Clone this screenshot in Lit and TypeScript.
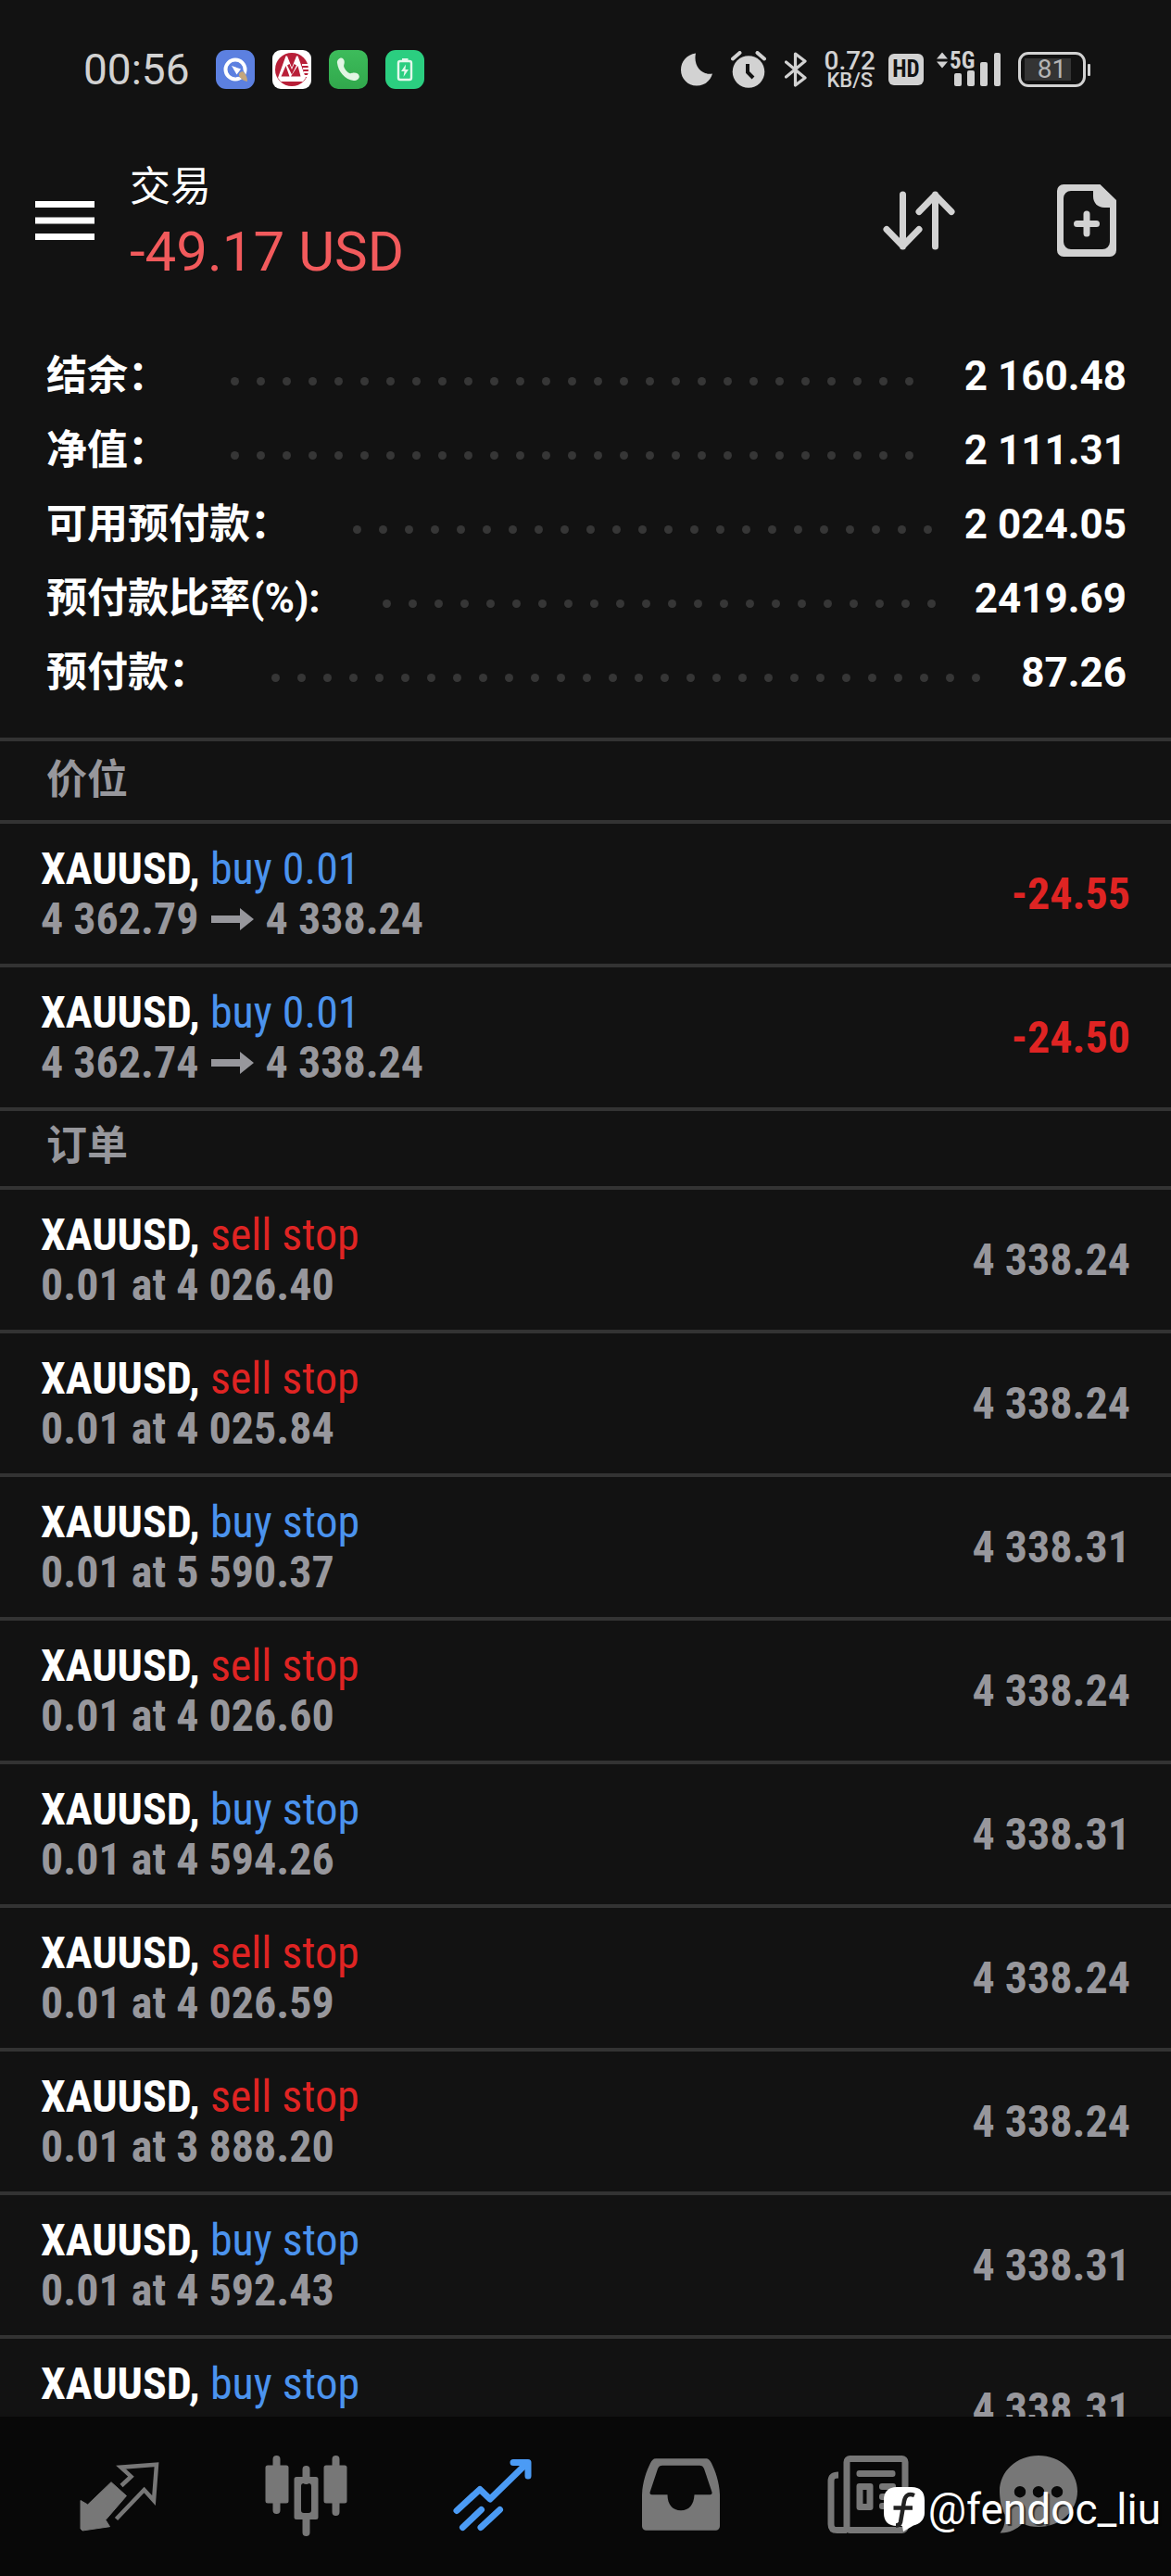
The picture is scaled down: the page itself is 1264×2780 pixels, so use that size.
import { LitElement, html, css, svg, nothing } from "lit";
import { customElement, property } from "lit/decorators.js";

type Side = "buy" | "sell";

interface Balance {
  label: string;
  value: string;
}

interface Position {
  symbol: string;
  side: Side;
  volume: string;
  open: string;
  current: string;
  profit: string;
}

interface Order {
  symbol: string;
  side: Side;
  volume: string;
  price: string;
  current: string;
}

const balances: Balance[] = [
  { label: "结余：", value: "2 160.48" },
  { label: "净值：", value: "2 111.31" },
  { label: "可用预付款：", value: "2 024.05" },
  { label: "预付款比率(%):", value: "2419.69" },
  { label: "预付款：", value: "87.26" },
];

const positions: Position[] = [
  { symbol: "XAUUSD", side: "buy", volume: "0.01", open: "4 362.79", current: "4 338.24", profit: "-24.55" },
  { symbol: "XAUUSD", side: "buy", volume: "0.01", open: "4 362.74", current: "4 338.24", profit: "-24.50" },
];

const order = (side: Side, price: string): Order => ({
  symbol: "XAUUSD",
  side,
  volume: "0.01",
  price,
  current: side === "buy" ? "4 338.31" : "4 338.24",
});

const orders: Order[] = [
  order("sell", "4 026.40"),
  order("sell", "4 025.84"),
  order("buy", "5 590.37"),
  order("sell", "4 026.60"),
  order("buy", "4 594.26"),
  order("sell", "4 026.59"),
  order("sell", "3 888.20"),
  order("buy", "4 592.43"),
  order("buy", "4 591.80"),
];

@customElement("status-bar")
export class StatusBar extends LitElement {
  static styles = css`
    :host {
      display: flex;
      justify-content: space-between;
      align-items: center;
      padding: 54px 87px 24px 90px;
      font-family: Roboto, "Noto Sans CJK SC", sans-serif;
      color: #d2d2d2;
    }
    .apps,
    .state,
    .modes {
      display: flex;
      align-items: center;
    }
    .apps {
      gap: 19px;
    }
    .state {
      gap: 14px;
    }
    .modes {
      gap: 20px;
      margin-right: 4px;
    }
    .time {
      font-size: 46px;
      line-height: 42px;
      margin-right: 9px;
    }
    svg {
      display: block;
      flex: none;
    }
    .speed {
      display: flex;
      flex-direction: column;
      align-items: center;
      font-weight: 500;
    }
    .rate {
      font-size: 28px;
      line-height: 24px;
    }
    .unit {
      font-size: 22px;
      line-height: 18px;
    }
    .hd {
      width: 38px;
      border-radius: 6px;
      background: #d2d2d2;
      color: #121212;
      font: 700 25px/34px "Roboto Condensed", "Liberation Sans Narrow", sans-serif;
      text-align: center;
    }
    .signal {
      position: relative;
    }
    .network {
      position: absolute;
      left: 14px;
      top: -3px;
      font: 700 25px/25px "Roboto Condensed", "Liberation Sans Narrow", sans-serif;
    }
    .battery {
      display: flex;
      align-items: center;
      gap: 2px;
      margin-left: 4px;
    }
    .cell {
      width: 67px;
      padding: 4px 0;
      border: 3px solid #d2d2d2;
      border-radius: 11px;
      background: linear-gradient(#343434, #343434) 4px 4px / 50px 24px no-repeat;
      color: #b5b5b5;
      font-size: 28px;
      line-height: 24px;
      text-align: center;
    }
    .tip {
      width: 3px;
      height: 13px;
      border-radius: 1px;
      background: #d2d2d2;
    }
  `;

  render() {
    return html`
      <div class="apps">
        <span class="time">00:56</span>
        <svg width="42" height="42" viewBox="0 0 42 42" aria-hidden="true">
          <rect width="42" height="42" rx="11" fill="#5c80e0" />
          <circle cx="21" cy="21" r="10.5" fill="none" stroke="#fff" stroke-width="4" />
          <path d="M24 22l5-1 8 14-14-7z" fill="#5c80e0" />
          <path d="M17 17l10 3.500-4.500 6z" fill="#fff" />
          <path d="M25 28q-1-4 4-5 5 4 5 11-6-1-9-6z" fill="#c4a67c" />
        </svg>
        <svg width="42" height="42" viewBox="0 0 42 42" aria-hidden="true">
          <rect width="42" height="42" rx="9" fill="#fff" />
          <circle cx="21" cy="21" r="18" fill="#b81f38" />
          <path d="M6 30L14.500 6.500h1.500L21 19l5-12.500h1.500L36 30l-3 4H9z" fill="#fff" />
          <path d="M9.500 28.500L14.500 17l4 11.500zM20 28.500L27.500 17l3 11.500zM16 16.500l2.500-1.500 2.500 6 2.500-6 2.500 1.500-5 10z" fill="#b81f38" />
          <path d="M32 16h7M33 20h6.500M34 24h5.500M35 28h4" stroke="#fff" stroke-width="1.800" />
        </svg>
        <svg width="42" height="42" viewBox="0 0 42 42" aria-hidden="true">
          <defs>
            <linearGradient id="call" x1="0" y1="0" x2="0" y2="1">
              <stop offset="0" stop-color="#3dbc5b" />
              <stop offset="1" stop-color="#31a84c" />
            </linearGradient>
          </defs>
          <rect width="42" height="42" rx="10" fill="url(#call)" />
          <path
            d="M9 14c-.5-3 2-5.500 4.500-5.500 2.500.5 4 3.500 3 6.500-.6 1.800-.6 3 .6 4.900 1.500 2.500 3 4.100 5.200 5.100 1.600.6 2.400-.3 4-.5 3.500-.3 6.300 1 6.500 4 0 2.500-2.600 4.600-6 4.500C17.500 32 10 23 9 14z"
            fill="#e2f5e4"
          />
        </svg>
        <svg width="42" height="42" viewBox="0 0 42 42" aria-hidden="true">
          <rect width="42" height="42" rx="11" fill="#2bce80" />
          <rect x="14" y="12" width="14" height="20" rx="2" fill="none" stroke="#e3f8ec" stroke-width="2.400" />
          <path d="M18 9h6.500v3H18z" fill="#e3f8ec" />
          <path d="M22 15.500l-5 7.500h3.500l-1 6 5.500-8h-3.500z" fill="#e3f8ec" />
        </svg>
      </div>
      <div class="state">
        <div class="modes">
          <svg width="34" height="36" viewBox="0 0 34 36" aria-label="勿扰">
            <path d="M16 0.500C6 2 0 9.500 0 18.500 0 28 7.500 35.500 17 35.500c8.500 0 15-5.500 17-13-11 2-21-8-18-22z" fill="#d2d2d2" />
          </svg>
          <svg width="38" height="40" viewBox="0 0 38 40" aria-label="闹钟">
            <circle cx="19" cy="22.500" r="17.300" fill="#d2d2d2" />
            <path d="M2 8.500L9.500 2M28.500 2L36 8.500" stroke="#d2d2d2" stroke-width="4" stroke-linecap="round" />
            <path d="M18 14v9l6 6" fill="none" stroke="#121212" stroke-width="4" />
          </svg>
          <svg width="24" height="38" viewBox="0 0 24 38" aria-label="蓝牙">
            <path d="M1.500 11L22 28 11.500 36V2L22 10 1.500 27" fill="none" stroke="#d2d2d2" stroke-width="3.200" stroke-linejoin="round" stroke-linecap="round" />
          </svg>
        </div>
        <div class="speed"><span class="rate">0.72</span><span class="unit">KB/S</span></div>
        <span class="hd">HD</span>
        <div class="signal">
          <span class="network">5G</span>
          <svg width="70" height="38" viewBox="0 0 70 38" aria-hidden="true">
            <path d="M0 7.500L6 .5l6 7zM0 10.500h12l-6 7z" fill="#d2d2d2" />
            <g fill="#d2d2d2">
              <rect x="19" y="23" width="8" height="14" rx="2" />
              <rect x="33" y="20" width="8" height="17" rx="2" />
              <rect x="47" y="11" width="8" height="26" rx="2" />
              <rect x="62" y="1" width="7" height="36" rx="2" />
            </g>
          </svg>
        </div>
        <div class="battery"><span class="cell">81</span><span class="tip"></span></div>
      </div>
    `;
  }
}

@customElement("account-summary")
export class AccountSummary extends LitElement {
  static styles = css`
    :host {
      display: block;
      padding: 58px 48px 30px 50px;
      font: 700 44px/80px Roboto, "Noto Sans CJK SC", sans-serif;
      color: #fff;
    }
    .list {
      margin: 0;
    }
    .line {
      display: flex;
      align-items: center;
    }
    .label,
    .value {
      margin: 0;
      white-space: nowrap;
    }
    .leader {
      flex: 1;
      display: flex;
      flex-wrap: wrap;
      gap: 19px;
      height: 9px;
      margin: 11px 28px 0 67px;
      overflow: hidden;
    }
    .dot {
      width: 9px;
      height: 9px;
      border-radius: 50%;
      background: #363636;
    }
  `;

  render() {
    return html`
      <dl class="list">
        ${balances.map(
          (b) => html`
            <div class="line">
              <dt class="label">${b.label}</dt>
              <span class="leader" aria-hidden="true">${Array.from({ length: 40 }, () => html`<i class="dot"></i>`)}</span>
              <dd class="value">${b.value}</dd>
            </div>
          `,
        )}
      </dl>
    `;
  }
}

@customElement("trade-row")
export class TradeRow extends LitElement {
  @property() symbol = "";
  @property() side: Side = "buy";
  @property() action = "";
  @property() from = "";
  @property() to = "";
  @property() amount = "";
  @property({ type: Boolean }) loss = false;

  static styles = css`
    :host {
      display: flex;
      align-items: center;
      justify-content: space-between;
      padding: 22px 44px 21px;
      border-bottom: 4px solid #333;
      font: 700 48px/54px "Roboto Condensed", "Liberation Sans Narrow", sans-serif;
      color: #97979c;
    }
    .symbol {
      color: #fff;
    }
    .action {
      font-weight: 400;
    }
    .buy {
      color: #4b93ee;
    }
    .sell {
      color: #df2423;
    }
    .prices {
      display: flex;
      align-items: center;
      gap: 13px;
    }
    .loss {
      color: #df2423;
    }
  `;

  render() {
    return html`
      <div>
        <div><span class="symbol">${this.symbol},</span> <span class="action ${this.side}">${this.action}</span></div>
        <div class="prices">
          <span>${this.from}</span>
          ${this.to
            ? html`<svg width="46" height="24" viewBox="0 0 46 24" aria-label="至">
                  <path d="M0 8h31V0l15 12-15 12v-8H0z" fill="#97979c" />
                </svg>
                <span>${this.to}</span>`
            : nothing}
        </div>
      </div>
      <span class=${this.loss ? "loss" : "quote"}>${this.amount}</span>
    `;
  }
}

const tabs = [
  {
    label: "行情",
    icon: svg`
      <path d="M8 53.500L15.700 58 41 33.700 57.500 48.500 35 74.500 39.500 81.700 10 86 8 84z" fill="currentColor" stroke="currentColor" stroke-width="1" stroke-linejoin="round" />
      <path d="M52 37.500L62.500 27.700 51.500 17.700 90 14.800 87 53.500 76.600 42 46.500 73.500" fill="none" stroke="currentColor" stroke-width="4.500" stroke-linejoin="miter" />`,
  },
  {
    label: "图表",
    icon: svg`
      <path d="M17.500 9v55M81.500 9v57M49.500 20v12M49.500 72v16" stroke="currentColor" stroke-width="8" stroke-linecap="round" />
      <rect x="5.500" y="15.500" width="25" height="41" rx="2.500" fill="currentColor" />
      <rect x="68.500" y="15.500" width="25" height="41" rx="2.500" fill="currentColor" />
      <path d="M39 28h21a2.500 2.500 0 0 1 2.500 2.500v41A2.500 2.500 0 0 1 60 74H39a2.500 2.500 0 0 1-2.500-2.500v-41A2.500 2.500 0 0 1 39 28zM47 35a3 3 0 0 0-3 3v26a3 3 0 0 0 3 3h5a3 3 0 0 0 3-3V38a3 3 0 0 0-3-3z" fill="currentColor" fill-rule="evenodd" />`,
  },
  {
    label: "交易",
    active: true,
    icon: svg`
      <g fill="none" stroke="currentColor" stroke-width="7" stroke-linejoin="round" stroke-linecap="round">
        <path d="M10 64.500L35 41.500 46 52 85 14" />
        <path d="M71 12.500H87V27" />
        <path d="M16.500 82.500L36.500 63.500M36 82.500L56.500 63.500" />
      </g>`,
  },
  {
    label: "历史",
    icon: svg`
      <path d="M23 8.300h54c3 0 4.500 2 6 5 4 8 8.500 20 9 34v34a4.500 4.500 0 0 1-4.500 4.500h-75A4.500 4.500 0 0 1 8 81.300v-34c.5-14 5-26 9-34 1.500-3 3-5 6-5zM30 15.700c-2.500 0-4 1-5 3.500L16.600 44.500c-.4 1.700.4 2.800 2 2.800H35.500C35.500 58 41 64.300 50 64.300S64 58 64.500 47.300H81.500c1.600 0 2.400-1.100 2-2.800L75 19.200c-1-2.500-2.500-3.500-5-3.500z" fill="currentColor" fill-rule="evenodd" />`,
  },
  {
    label: "新闻",
    icon: svg`
      <rect x="27" y="8.500" width="63" height="77" rx="3.500" fill="none" stroke="currentColor" stroke-width="7" />
      <path d="M18 26c-6 0-8 2-8 7v46c0 4.500 2 6.500 6.500 6.500H27" fill="none" stroke="currentColor" stroke-width="7" />
      <rect x="37.500" y="21" width="42" height="7" rx="3" fill="currentColor" />
      <path d="M40.500 35h12a3 3 0 0 1 3 3v23a3 3 0 0 1-3 3h-12a3 3 0 0 1-3-3V38a3 3 0 0 1 3-3zM44.500 42v15h4V42z" fill="currentColor" fill-rule="evenodd" />
      <rect x="62" y="35" width="18" height="7" rx="3" fill="currentColor" />
      <rect x="62" y="46" width="18" height="7" rx="3" fill="currentColor" />
      <rect x="62" y="56" width="18" height="7" rx="3" fill="currentColor" />`,
  },
  {
    label: "消息",
    icon: svg`
      <path d="M50 5C73.500 5 92 22 92 43.500S73.500 82 50 82c-6.500 0-12-1-17.500-3.500C26 85 18 89 8.500 88.500 13 83 14.500 76 13.500 68.500 10 62 8 52 8 43.500 8 22 26.500 5 50 5zM30 38a6.200 6.200 0 1 0 0 12.400A6.200 6.200 0 0 0 30 38zM50 38a6.200 6.200 0 1 0 0 12.400A6.200 6.200 0 0 0 50 38zM70 38a6.200 6.200 0 1 0 0 12.400A6.200 6.200 0 0 0 70 38z" fill="currentColor" fill-rule="evenodd" />`,
  },
];

@customElement("app-root")
export class AppRoot extends LitElement {
  static styles = css`
    :host {
      display: flex;
      flex-direction: column;
      position: relative;
      height: 100vh;
      overflow: hidden;
      background: #121212;
      font-family: Roboto, "Noto Sans CJK SC", sans-serif;
      color: #fff;
    }
    button {
      display: block;
      padding: 0;
      border: 0;
      background: none;
      color: #d2d2d2;
    }
    svg {
      display: block;
    }
    .header {
      display: flex;
      align-items: center;
      padding: 48px 59px 0 38px;
    }
    .menu {
      margin-right: 38px;
      color: #fff;
    }
    .heading {
      flex: 1;
      display: grid;
      gap: 4px;
      padding-top: 4px;
    }
    .title {
      margin: 0;
      font-weight: 400;
      font-size: 44px;
      line-height: 60px;
    }
    .total {
      font-size: 60px;
      line-height: 72px;
      color: #f25a5c;
    }
    .tools {
      display: flex;
      align-items: center;
      gap: 110px;
    }
    .body {
      flex: 1;
      min-height: 0;
      overflow: hidden;
    }
    .section {
      margin: 0;
      padding: 8px 50px 13px;
      border-bottom: 4px solid #333;
      font-weight: 700;
      font-size: 44px;
      line-height: 60px;
      color: #97979c;
    }
    .first {
      padding-top: 12px;
      border-top: 4px solid #333;
    }
    .rows {
      margin: 0;
      padding: 0;
      list-style: none;
    }
    .nav {
      display: grid;
      grid-template-columns: repeat(5, 202fr) 166fr;
      padding: 37px 60px 35px 28px;
      background: #080808;
    }
    .tab {
      justify-self: center;
      color: #777;
    }
    .active {
      color: #4b9bf5;
    }
    .mark {
      position: absolute;
      right: 11px;
      bottom: 42px;
      display: flex;
      align-items: center;
      gap: 4px;
      font-size: 46px;
      line-height: 60px;
      text-shadow: 2px 2px 1px #0009;
    }
  `;

  render() {
    return html`
      <status-bar></status-bar>
      <header class="header">
        <button class="menu" aria-label="菜单">
          <svg width="64" height="44" viewBox="0 0 64 44"><path d="M0 4.500h64M0 22h64M0 39.500h64" stroke="currentColor" stroke-width="7" /></svg>
        </button>
        <div class="heading">
          <h1 class="title">交易</h1>
          <div class="total">-49.17 USD</div>
        </div>
        <div class="tools">
          <button aria-label="排序">
            <svg width="78" height="64" viewBox="0 0 78 64">
              <path d="M21.500 4v56M4 41.500L21.500 59.500 39 41.500M56.500 60V4M39 22.500L56.500 4.500 74 22.500" fill="none" stroke="currentColor" stroke-width="7" stroke-linecap="round" stroke-linejoin="round" />
            </svg>
          </button>
          <button aria-label="新订单">
            <svg width="64" height="78" viewBox="0 0 64 78">
              <path d="M7 0h39.500L64 17v54a7 7 0 0 1-7 7H7a7 7 0 0 1-7-7V7a7 7 0 0 1 7-7zM15 7a8 8 0 0 0-8 8v47a8 8 0 0 0 8 8h34a8 8 0 0 0 8-8V25h-6c-7 0-12-5-12-12V7z" fill="currentColor" fill-rule="evenodd" />
              <path d="M21.500 42.500h21M32 32v21" stroke="currentColor" stroke-width="7" stroke-linecap="round" />
            </svg>
          </button>
        </div>
      </header>
      <main class="body">
        <account-summary></account-summary>
        <h2 class="section first">价位</h2>
        <ul class="rows">
          ${positions.map(
            (p) => html`<li>
              <trade-row .symbol=${p.symbol} .side=${p.side} .action=${`${p.side} ${p.volume}`} .from=${p.open} .to=${p.current} .amount=${p.profit} .loss=${true}></trade-row>
            </li>`,
          )}
        </ul>
        <h2 class="section">订单</h2>
        <ul class="rows">
          ${orders.map(
            (o) => html`<li>
              <trade-row .symbol=${o.symbol} .side=${o.side} .action=${`${o.side} stop`} .from=${`${o.volume} at ${o.price}`} .amount=${o.current}></trade-row>
            </li>`,
          )}
        </ul>
      </main>
      <nav class="nav">
        ${tabs.map(
          (t) => html`<button class="tab ${t.active ? "active" : ""}" aria-label=${t.label}>
            <svg width="100" height="100" viewBox="0 0 100 100">${t.icon}</svg>
          </button>`,
        )}
      </nav>
      <div class="mark">
        <svg width="44" height="50" viewBox="0 0 44 50" aria-hidden="true">
          <path d="M14 1h16c9 0 14 5 14 14v14c0 7-5 12-12 13.500L21 49l-1-6h-6C5 43 0 38 0 29V15C0 6 5 1 14 1z" fill="#fff" />
          <path d="M33 10c-7-3-10 1-11 6l-4 23c-.5 2-2 3.500-5 3.500M10.500 23.500H31" fill="none" stroke="#222" stroke-width="4.500" />
        </svg>
        <span>@fendoc_liu</span>
      </div>
    `;
  }
}
